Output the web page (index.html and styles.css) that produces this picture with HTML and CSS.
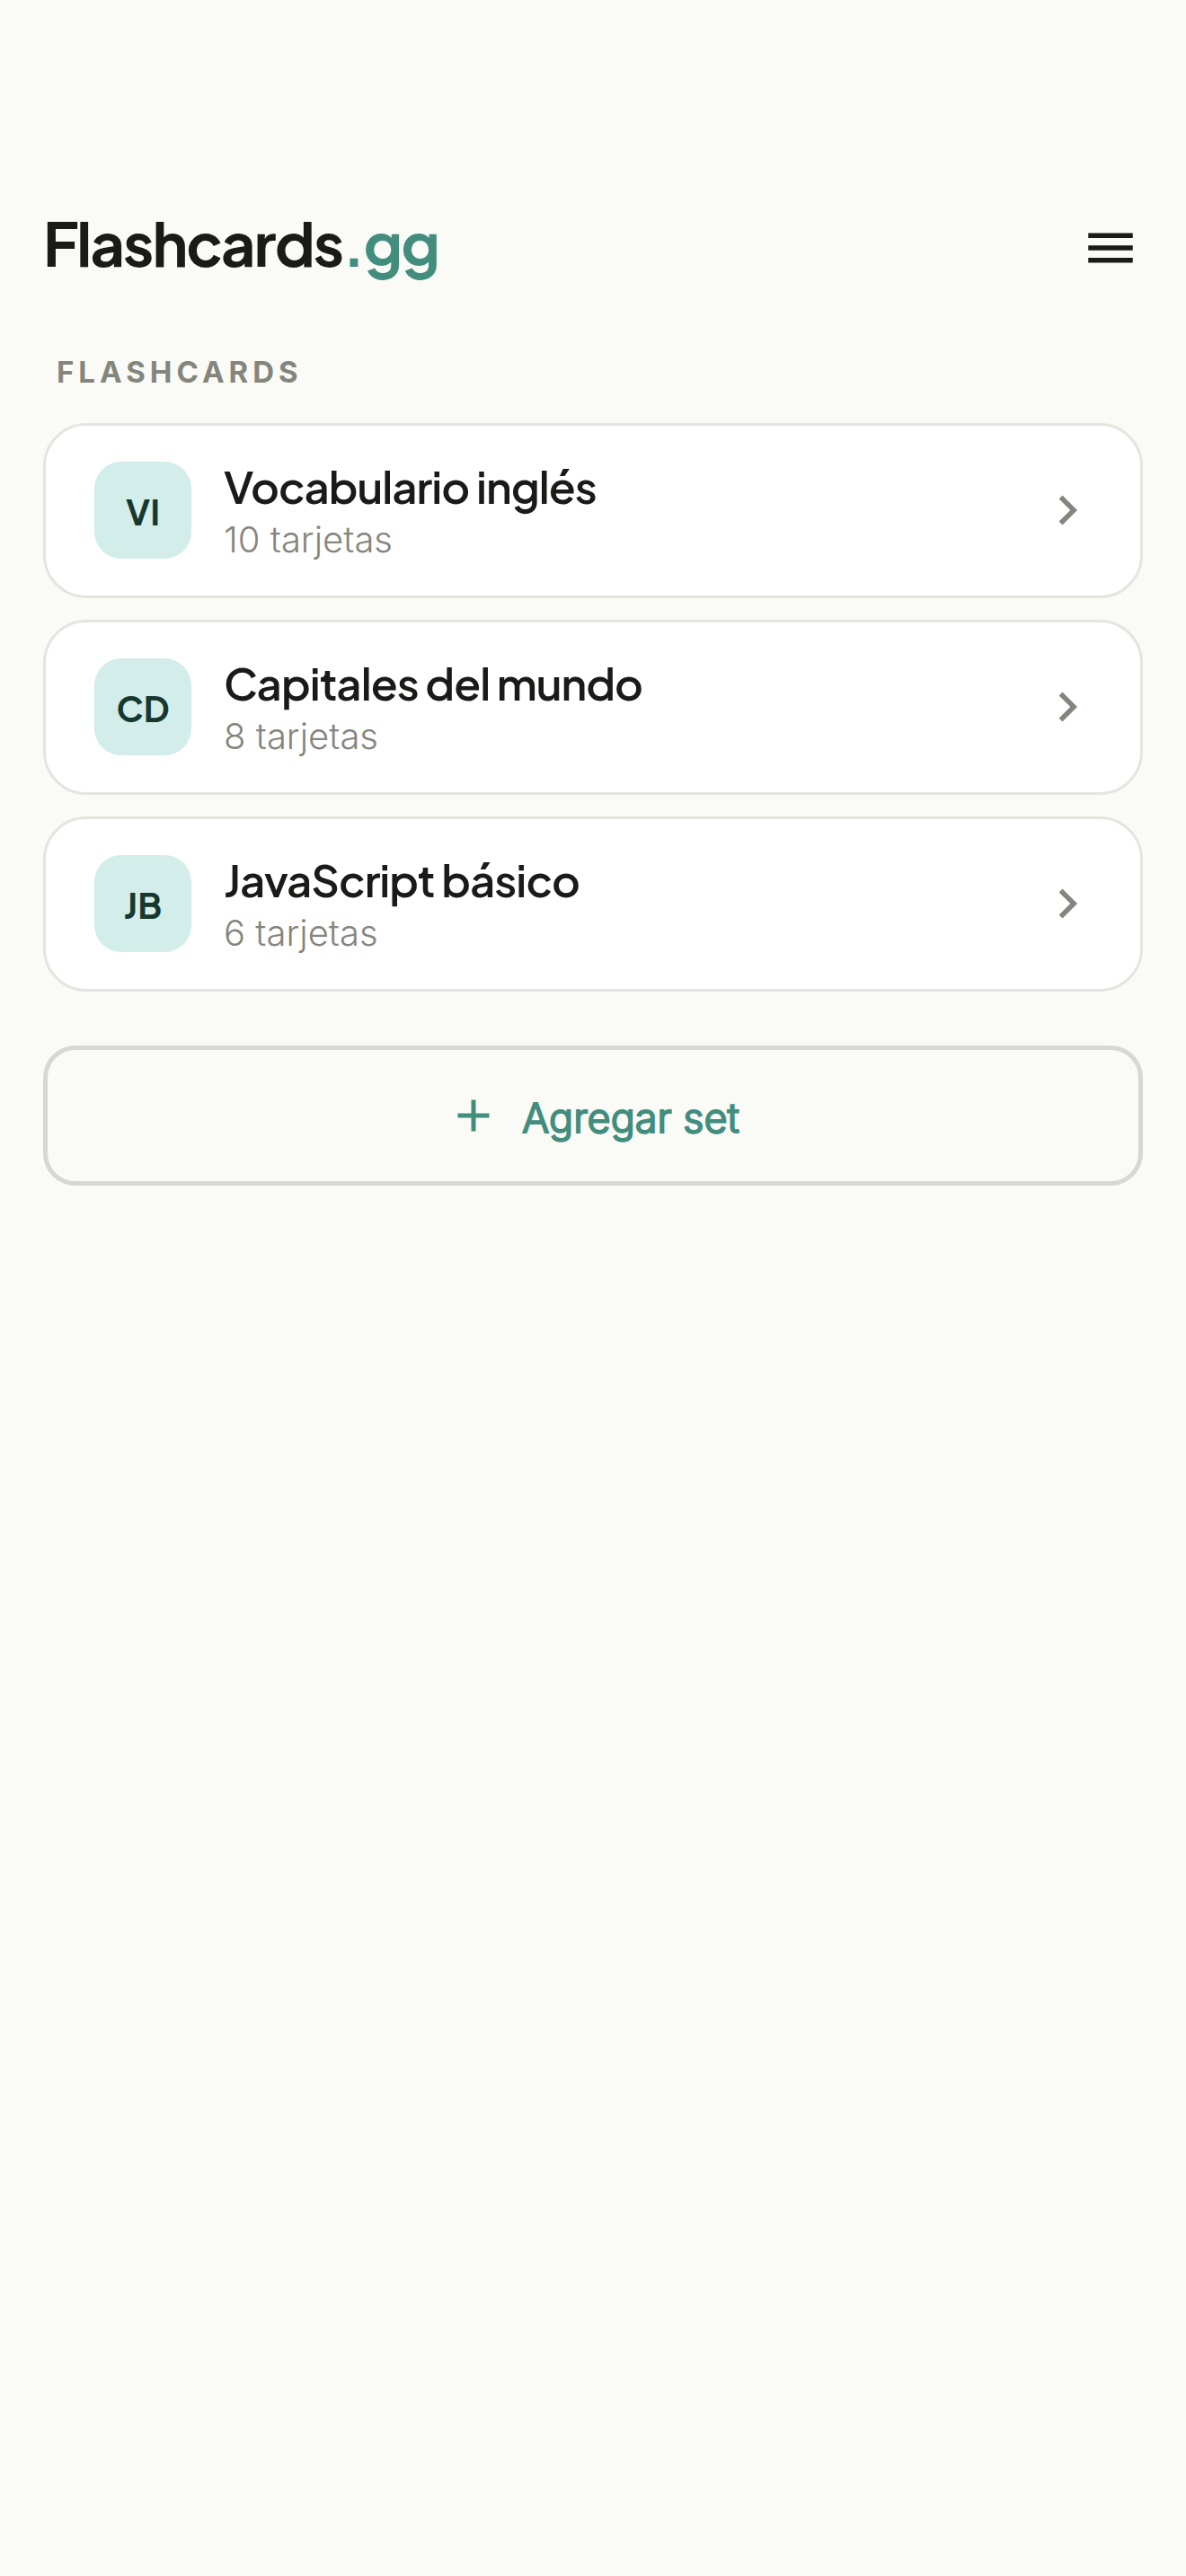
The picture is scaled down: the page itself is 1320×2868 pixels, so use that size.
FILE: index.html
```html
<!DOCTYPE html>
<html lang="es">
    <head>
        <meta charset="UTF-8">
        <meta name="viewport" content="width=device-width, initial-scale=1">
        <title>Flashcards.gg</title>
        <link rel="stylesheet" href="styles.css">
    </head>
    <body>
        <header class="top">
            <h1 class="logo">Flashcards<span class="logo-gg">.gg</span></h1>
            <button class="menu-btn" type="button" aria-label="Menú">
                <svg class="icon" viewBox="0 0 24 24"><path d="M3 18h18v-2H3v2zm0-5h18v-2H3v2zm0-7v2h18V6H3z"/></svg>
            </button>
        </header>

        <main>
            <h2 class="label">FLASHCARDS</h2>
            <!-- lista de sets -->
            <nav class="list">
                <a class="card" href="#vocabulario">
                    <span class="badge">VI</span>
                    <span class="info">
                        <span class="name">Vocabulario inglés</span>
                        <span class="count">10 tarjetas</span>
                    </span>
                    <svg class="icon arrow" viewBox="0 0 24 24"><path d="M10 6L8.59 7.41 13.17 12l-4.58 4.59L10 18l6-6z"/></svg>
                </a>
                <a class="card" href="#capitales">
                    <span class="badge">CD</span>
                    <span class="info">
                        <span class="name">Capitales del mundo</span>
                        <span class="count">8 tarjetas</span>
                    </span>
                    <svg class="icon arrow" viewBox="0 0 24 24"><path d="M10 6L8.59 7.41 13.17 12l-4.58 4.59L10 18l6-6z"/></svg>
                </a>
                <a class="card" href="#javascript">
                    <span class="badge">JB</span>
                    <span class="info">
                        <span class="name">JavaScript básico</span>
                        <span class="count">6 tarjetas</span>
                    </span>
                    <svg class="icon arrow" viewBox="0 0 24 24"><path d="M10 6L8.59 7.41 13.17 12l-4.58 4.59L10 18l6-6z"/></svg>
                </a>
            </nav>
            <button class="add-btn" type="button">
                <svg class="plus" viewBox="0 0 24 24"><path d="M19 13h-6v6h-2v-6H5v-2h6V5h2v6h6v2z"/></svg>
                <span class="add-text">Agregar set</span>
            </button>
        </main>
    </body>
</html>
```
FILE: styles.css
```css
*{
    box-sizing: border-box;
}
body{
    margin: 0;
    padding: 225px 48px 48px;
    background-color: #fafbf6;
    color: #1a1a18;
    font-family: "Plus Jakarta Sans", Inter, sans-serif;
}
/* 아이콘 공통 */
.icon{
    display: block;
    width: 66px;
    height: 66px;
    fill: currentColor;
}
/* 상단영역 */
.top{
    display: flex;
    justify-content: space-between;
    align-items: flex-start;
    padding-right: 3px;
}
.logo{
    margin: 0;
    font-size: 67px;
    font-weight: 700;
    line-height: 90px;
    letter-spacing: -2px;
}
.logo-gg{
    color: #428d7e;
}
.menu-btn{
    padding: 18px 0;
    border: none;
    background: none;
    color: inherit;
}
/* 목록 제목 */
.label{
    margin: 63px 15px 33px;
    color: #84857d;
    font-family: Inter, sans-serif;
    font-size: 33px;
    font-weight: 700;
    line-height: 48px;
    letter-spacing: 5px;
}
/* 목록 */
.list{
    display: flex;
    flex-direction: column;
    gap: 24px;
}
.card{
    display: flex;
    align-items: center;
    gap: 36px;
    padding: 34px 48px 35px 54px;
    border: 3px solid #e4e5df;
    border-radius: 48px;
    background-color: #fff;
    color: inherit;
    text-decoration: none;
}
.badge{
    flex: none;
    width: 108px;
    height: 108px;
    border-radius: 30px;
    background-color: #d3edea;
    color: #17382f;
    font-size: 39px;
    font-weight: 700;
    line-height: 111px;
    text-align: center;
}
.info{
    flex: 1;
    min-width: 0;
}
.name,
.count{
    display: block;
}
.name{
    font-size: 49px;
    font-weight: 600;
    line-height: 66px;
    letter-spacing: -1px;
}
.count{
    color: #84857d;
    font-family: Inter, sans-serif;
    font-size: 40px;
    font-weight: 350;
    line-height: 54px;
}
.arrow{
    flex: none;
    color: #84857d;
}
/* 추가 버튼 */
.add-btn{
    display: flex;
    justify-content: center;
    align-items: flex-end;
    gap: 24px;
    width: 100%;
    margin-top: 60px;
    padding: 43px;
    border: 5px solid #d7d8d2;
    border-radius: 36px;
    background: none;
    color: #428d7e;
    font-family: Inter, sans-serif;
    font-size: 45px;
    font-weight: 300;
    line-height: 54px;
}
.add-text{
    -webkit-text-stroke: 2px currentColor;
}
.plus{
    width: 60px;
    height: 60px;
    fill: currentColor;
}
```
